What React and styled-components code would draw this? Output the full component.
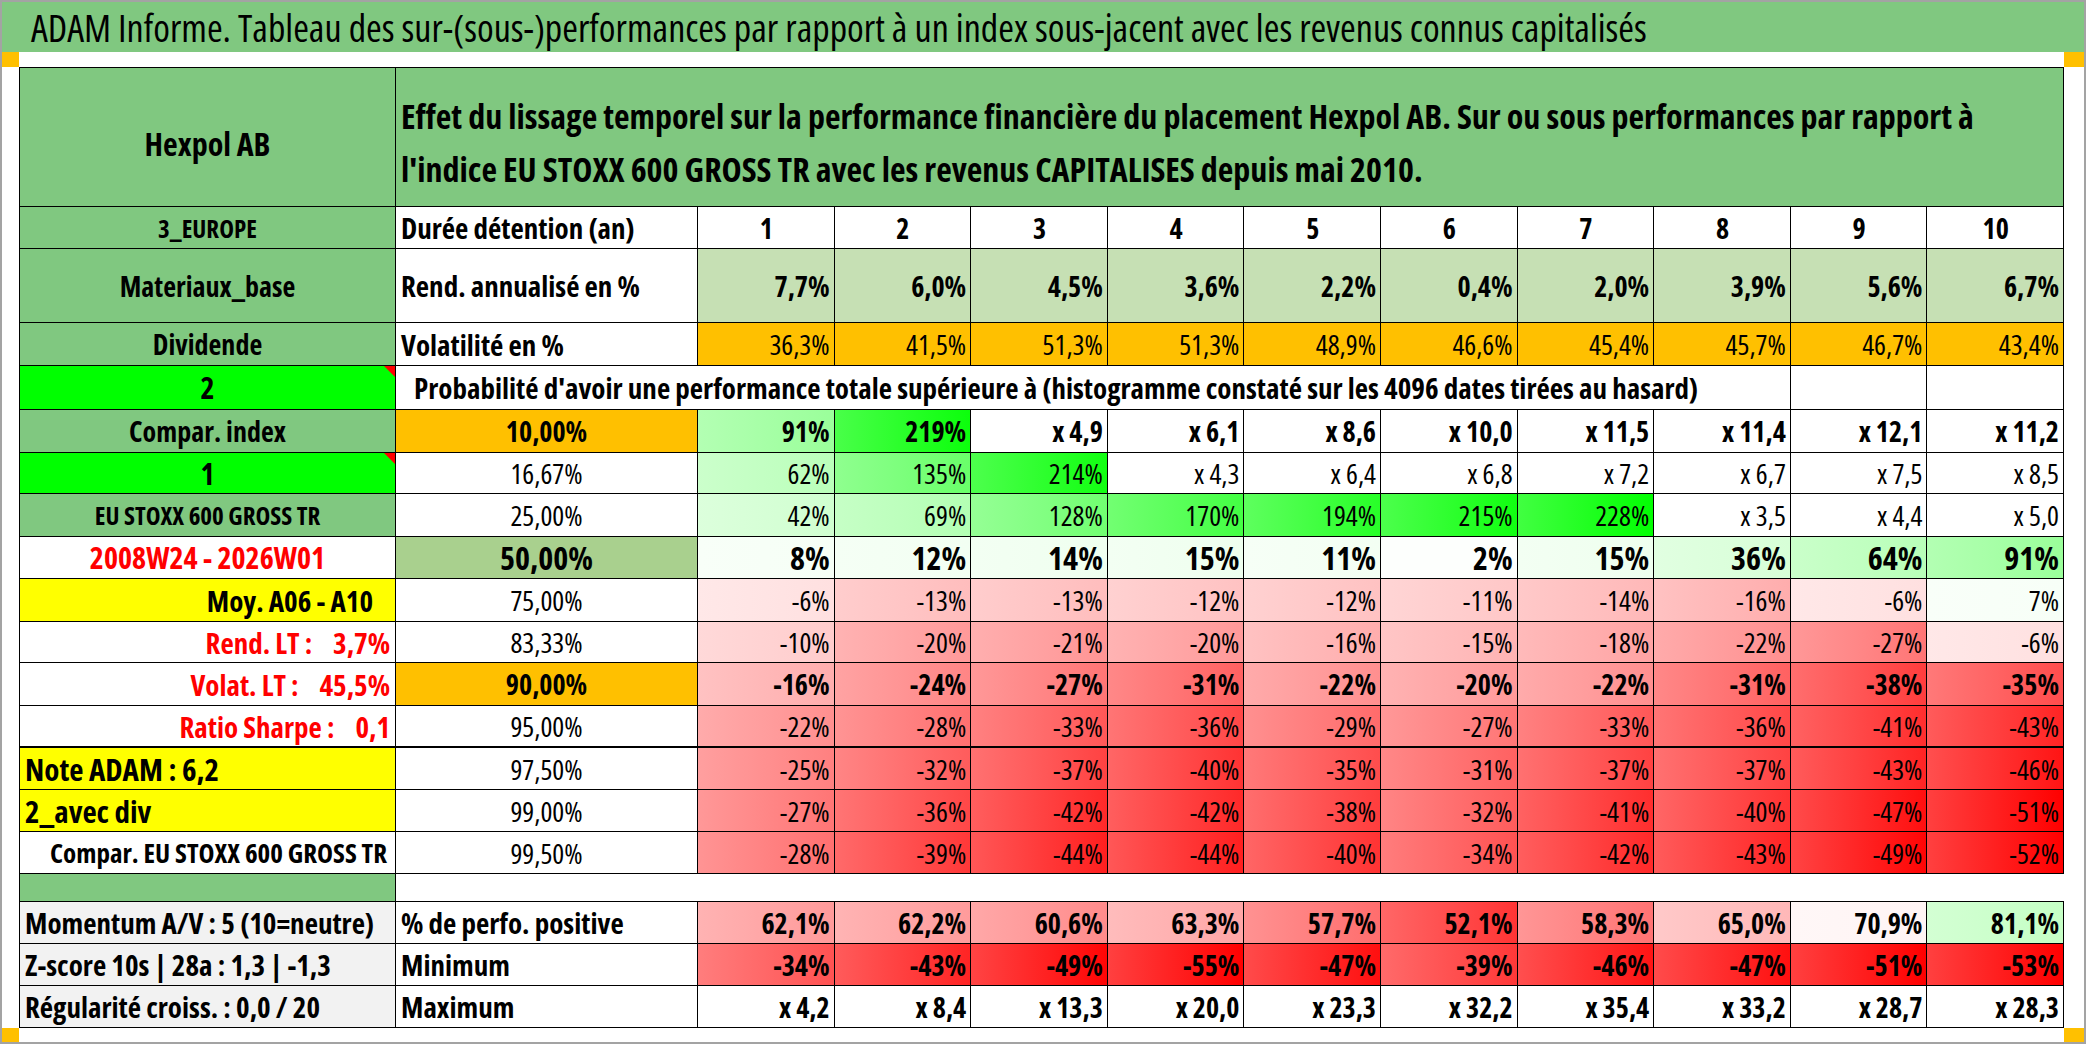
import React from 'react'
import styled, { createGlobalStyle } from 'styled-components'

const FONT = `'Open Sans', 'Roboto', 'DejaVu Sans Condensed', sans-serif`

const GREEN = '#80c880'
const BRIGHT = '#00ff00'
const ORANGE = '#ffc000'
const YELLOW = '#ffff00'
const SAGE = '#a9d08e'
const PALE = '#c6e0b4'
const GREY = '#f2f2f2'
const RED = '#ff0000'

const Global = createGlobalStyle`
  html, body { margin: 0; padding: 0; background: #fff; }
  body { font-family: ${FONT}; font-stretch: 75%; color: #000; }
  * { box-sizing: border-box; }
`

const Frame = styled.div`
  width: 2086px;
  height: 1044px;
  border: 2px solid #a3a3a3;
  display: flex;
  flex-direction: column;
  overflow: hidden;
  background: #fff;
`

const TitleBar = styled.div`
  height: 50px;
  background: ${GREEN};
  display: flex;
  align-items: center;
  padding: 0 0 0 29px;
  font-size: 38px;
  white-space: nowrap;
`

const Strip = styled.div`
  height: ${p => p.$h}px;
  display: flex;
  justify-content: space-between;
`

const Mark = styled.div`
  width: ${p => p.$w}px;
  background: ${ORANGE};
`

const Body = styled.div`
  display: flex;
  padding: 0 20px 0 17px;
`

const Sheet = styled.div`
  flex: 1;
  display: grid;
  grid-template-columns: 376px 302px repeat(10, 1fr);
  grid-template-rows: 139px 42px 74px 43px 44px 43px 41px 43px 42px 43px 41px 43px 42px 42px 42px 42px 28px 42px 42px 42px;
  border-left: 1px solid #000;
  border-top: 1px solid #000;
`

const Cell = styled.div`
  position: relative;
  display: flex;
  align-items: center;
  justify-content: ${p => (p.$align === 'left' ? 'flex-start' : p.$align === 'right' ? 'flex-end' : 'center')};
  padding: 0 ${p => p.$padR ?? 5}px 0 ${p => p.$padL ?? 5}px;
  grid-column: span ${p => p.$span || 1};
  background: ${p => p.$bg || '#fff'};
  color: ${p => p.$color || '#000'};
  font-size: ${p => p.$size || 28}px;
  font-weight: ${p => (p.$bold ? 700 : 400)};
  border-right: ${p => (p.$open ? 'none' : '1px solid #000')};
  border-bottom: ${p => (p.$thick ? 2 : 1)}px solid #000;
  white-space: pre;
  overflow: hidden;
`

const Label = styled(Cell)`
  font-weight: 700;
`

const Title = styled(Label)`
  padding-top: 12px;
`

const Desc = styled(Cell)`
  justify-content: ${p => (p.$align === 'left' ? 'flex-start' : 'center')};
`

const Caption = styled(Desc)`
  font-weight: 700;
  font-size: ${p => p.$size || 29}px;
`

const Value = styled(Cell)`
  justify-content: ${p => (p.$center ? 'center' : 'flex-end')};
  padding-right: 4px;
`

const Heading = styled(Cell)`
  justify-content: flex-start;
  align-items: center;
  white-space: nowrap;
  line-height: 53px;
  font-size: 34px;
  font-weight: 700;
  padding: 12px 0 0 5px;
  background: ${GREEN};
`

const Flag = styled.span`
  position: absolute;
  top: 0;
  right: 0;
  width: 0;
  height: 0;
  border-left: 11px solid transparent;
  border-top: 11px solid ${RED};
`

const num = s => parseFloat(s.replace('%', '').replace(',', '.'))

const tint = (r, g, b, t) => {
  const m = c => Math.round(255 - (255 - c) * t)
  return `rgb(${m(r)}, ${m(g)}, ${m(b)})`
}

const fade = (r, g, b, t) => `linear-gradient(90deg, ${tint(r, g, b, t * 0.75)}, ${tint(r, g, b, t)})`

// colour scale used by the conditional formatting of the grid
const scale = s => {
  if (s.startsWith('x')) return '#fff'
  const v = num(s)
  if (v < 0) return fade(255, 0, 0, Math.min(1, -v / 50))
  return fade(0, 255, 0, Math.min(1, v / 230))
}

const positive = s => {
  const v = num(s)
  if (v < 72) return fade(255, 0, 0, Math.min(1, (72 - v) / 25))
  return fade(0, 255, 0, Math.min(1, (v - 72) / 40))
}

const years = ['1', '2', '3', '4', '5', '6', '7', '8', '9', '10']
const rend = ['7,7%', '6,0%', '4,5%', '3,6%', '2,2%', '0,4%', '2,0%', '3,9%', '5,6%', '6,7%']
const vol = ['36,3%', '41,5%', '51,3%', '51,3%', '48,9%', '46,6%', '45,4%', '45,7%', '46,7%', '43,4%']

const grid = [
  {
    label: { text: 'Compar. index', bg: GREEN },
    desc: { text: '10,00%', bg: ORANGE, bold: true },
    bold: true,
    vals: ['91%', '219%', 'x 4,9', 'x 6,1', 'x 8,6', 'x 10,0', 'x 11,5', 'x 11,4', 'x 12,1', 'x 11,2'],
  },
  {
    label: { text: '1', bg: BRIGHT, flag: true, size: 30 },
    desc: { text: '16,67%' },
    vals: ['62%', '135%', '214%', 'x 4,3', 'x 6,4', 'x 6,8', 'x 7,2', 'x 6,7', 'x 7,5', 'x 8,5'],
  },
  {
    label: { text: 'EU STOXX 600 GROSS TR', bg: GREEN, size: 25 },
    desc: { text: '25,00%' },
    vals: ['42%', '69%', '128%', '170%', '194%', '215%', '228%', 'x 3,5', 'x 4,4', 'x 5,0'],
  },
  {
    label: { text: '2008W24 - 2026W01', color: RED, size: 30 },
    desc: { text: '50,00%', bg: SAGE, bold: true, size: 32 },
    bold: true,
    size: 32,
    vals: ['8%', '12%', '14%', '15%', '11%', '2%', '15%', '36%', '64%', '91%'],
  },
  {
    label: { text: 'Moy. A06 - A10', bg: YELLOW, align: 'right', padR: 22, size: 29 },
    desc: { text: '75,00%' },
    vals: ['-6%', '-13%', '-13%', '-12%', '-12%', '-11%', '-14%', '-16%', '-6%', '7%'],
  },
  {
    label: { text: 'Rend. LT :    3,7%', color: RED, align: 'right', size: 29 },
    desc: { text: '83,33%' },
    vals: ['-10%', '-20%', '-21%', '-20%', '-16%', '-15%', '-18%', '-22%', '-27%', '-6%'],
  },
  {
    label: { text: 'Volat. LT :    45,5%', color: RED, align: 'right', size: 29 },
    desc: { text: '90,00%', bg: ORANGE, bold: true },
    bold: true,
    vals: ['-16%', '-24%', '-27%', '-31%', '-22%', '-20%', '-22%', '-31%', '-38%', '-35%'],
  },
  {
    label: { text: 'Ratio Sharpe :    0,1', color: RED, align: 'right', size: 29 },
    desc: { text: '95,00%' },
    thick: true,
    vals: ['-22%', '-28%', '-33%', '-36%', '-29%', '-27%', '-33%', '-36%', '-41%', '-43%'],
  },
  {
    label: { text: 'Note ADAM : 6,2', bg: YELLOW, align: 'left', size: 31 },
    desc: { text: '97,50%' },
    vals: ['-25%', '-32%', '-37%', '-40%', '-35%', '-31%', '-37%', '-37%', '-43%', '-46%'],
  },
  {
    label: { text: '2_avec div', bg: YELLOW, align: 'left', size: 31 },
    desc: { text: '99,00%' },
    vals: ['-27%', '-36%', '-42%', '-42%', '-38%', '-32%', '-41%', '-40%', '-47%', '-51%'],
  },
  {
    label: { text: 'Compar. EU STOXX 600 GROSS TR', align: 'right', padR: 8, size: 27 },
    desc: { text: '99,50%' },
    vals: ['-28%', '-39%', '-44%', '-44%', '-40%', '-34%', '-42%', '-43%', '-49%', '-52%'],
  },
]

const summary = [
  {
    label: 'Momentum A/V : 5 (10=neutre)',
    desc: '% de perfo. positive',
    vals: ['62,1%', '62,2%', '60,6%', '63,3%', '57,7%', '52,1%', '58,3%', '65,0%', '70,9%', '81,1%'],
    paint: positive,
  },
  {
    label: 'Z-score 10s | 28a : 1,3 | -1,3',
    desc: 'Minimum',
    vals: ['-34%', '-43%', '-49%', '-55%', '-47%', '-39%', '-46%', '-47%', '-51%', '-53%'],
    paint: scale,
  },
  {
    label: 'Régularité croiss. : 0,0 / 20',
    desc: 'Maximum',
    vals: ['x 4,2', 'x 8,4', 'x 13,3', 'x 20,0', 'x 23,3', 'x 32,2', 'x 35,4', 'x 33,2', 'x 28,7', 'x 28,3'],
    paint: () => '#fff',
  },
]

export default function App() {
  return (
    <>
      <Global />
      <Frame>
        <TitleBar>
          ADAM Informe. Tableau des sur-(sous-)performances par rapport à un index sous-jacent avec les revenus connus capitalisés
        </TitleBar>
        <Strip $h={16}>
          <Mark $w={17} />
          <Mark $w={20} />
        </Strip>
        <Body>
          <Sheet>
            <Title $bg={GREEN} $size={32}>Hexpol AB</Title>
            <Heading $span={11}>
              <span>
                Effet du lissage temporel sur la performance financière du placement Hexpol AB. Sur ou sous performances par rapport à
                <br />
                l'indice EU STOXX 600 GROSS TR avec les revenus CAPITALISES depuis mai 2010.
              </span>
            </Heading>

            <Label $bg={GREEN} $size={25}>3_EUROPE</Label>
            <Caption $align="left">Durée détention (an)</Caption>
            {years.map(y => (
              <Value key={y} $center $bold>{y}</Value>
            ))}

            <Label $bg={GREEN}>Materiaux_base</Label>
            <Caption $align="left">Rend. annualisé en %</Caption>
            {rend.map((v, i) => (
              <Value key={i} $bg={PALE} $bold>{v}</Value>
            ))}

            <Label $bg={GREEN}>Dividende</Label>
            <Caption $align="left">Volatilité en %</Caption>
            {vol.map((v, i) => (
              <Value key={i} $bg={ORANGE}>{v}</Value>
            ))}

            <Label $bg={BRIGHT} $size={30}>
              2<Flag />
            </Label>
            <Caption $align="left" $span={9} $padL={18}>
              Probabilité d'avoir une performance totale supérieure à (histogramme constaté sur les 4096 dates tirées au hasard)
            </Caption>
            <Value />
            <Value />

            {grid.map((row, r) => (
              <React.Fragment key={r}>
                <Label
                  $bg={row.label.bg}
                  $color={row.label.color}
                  $size={row.label.size}
                  $align={row.label.align}
                  $padR={row.label.padR}
                  $thick={row.thick}
                >
                  {row.label.text}
                  {row.label.flag && <Flag />}
                </Label>
                <Desc $bg={row.desc.bg} $bold={row.desc.bold} $size={row.desc.size} $thick={row.thick}>
                  {row.desc.text}
                </Desc>
                {row.vals.map((v, i) => (
                  <Value key={i} $bg={scale(v)} $bold={row.bold} $size={row.size} $thick={row.thick}>
                    {v}
                  </Value>
                ))}
              </React.Fragment>
            ))}

            <Label $bg={GREEN} />
            <Cell $span={11} $open />

            {summary.map((row, r) => (
              <React.Fragment key={r}>
                <Label $bg={GREY} $align="left" $size={29}>{row.label}</Label>
                <Caption $align="left">{row.desc}</Caption>
                {row.vals.map((v, i) => (
                  <Value key={i} $bg={row.paint(v)} $bold>{v}</Value>
                ))}
              </React.Fragment>
            ))}
          </Sheet>
        </Body>
        <Strip $h={14}>
          <Mark $w={17} />
          <Mark $w={20} />
        </Strip>
      </Frame>
    </>
  )
}
